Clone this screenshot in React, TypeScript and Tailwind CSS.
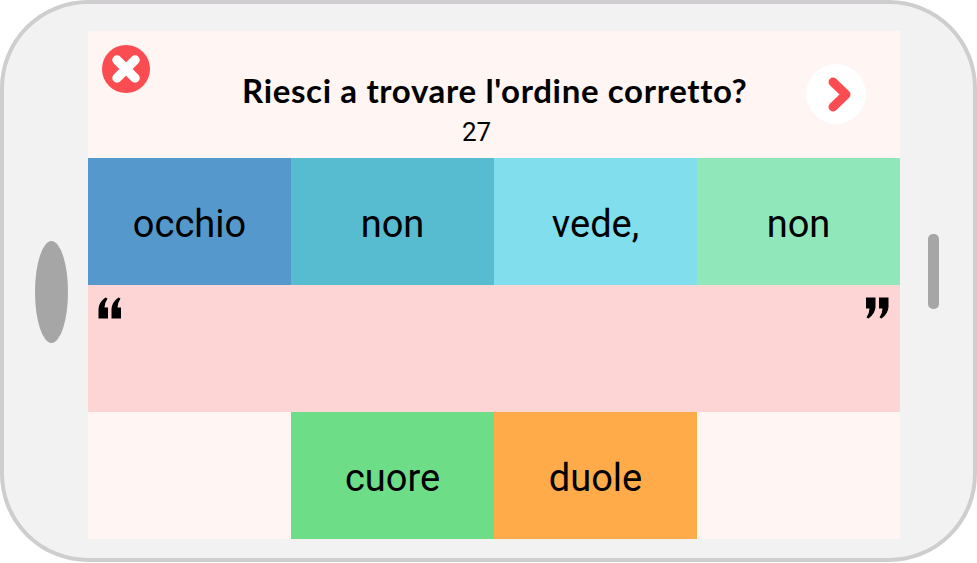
const topWords = [
  { text: "occhio", color: "bg-[#5599cc]" },
  { text: "non", color: "bg-[#57bccf]" },
  { text: "vede,", color: "bg-[#80deed]" },
  { text: "non", color: "bg-[#90e8ba]" },
];

const bottomWords = [
  { text: "", color: "" },
  { text: "cuore", color: "bg-[#6edd87]" },
  { text: "duole", color: "bg-[#ffab49]" },
  { text: "", color: "" },
];

function WordCell({ text, color }: { text: string; color: string }) {
  return (
    <div className={`flex items-center justify-center pt-[5px] text-[38px] text-black ${color}`}>
      {text}
    </div>
  );
}

/* one double quote mark, the closing one is the same drawing turned round */
function QuoteMark({ className }: { className?: string }) {
  return (
    <svg width="24" height="22" viewBox="0 0 24 22" className={className}>
      <path d="M7.5 0.5L9.5 1.5Q6.5 6 6.5 10.5H10V21.5H0.5V12Q1 5 7.5 0.5Z" fill="#000" />
      <path d="M20.5 0.5L22.5 1.5Q19.5 6 19.5 10.5H23V21.5H13.5V12Q14 5 20.5 0.5Z" fill="#000" />
    </svg>
  );
}

export default function App() {
  return (
    <div className="w-[977px] h-[563px] bg-white overflow-hidden font-['Roboto',sans-serif]">
      {/* phone body */}
      <div className="flex h-[562px] w-[977px] items-start rounded-[88px] border-[4px] border-[#cfcdcf] bg-[#f2f2f2]">
        {/* left speaker */}
        <div className="ml-[31px] mt-[237px] h-[102px] w-[33px] rounded-[50%] bg-[#a6a6a6]" />

        {/* screen */}
        <div className="ml-[20px] mt-[27px] grid h-[508px] w-[812px] grid-cols-4 grid-rows-4 bg-[#fff5f2]">
          <div className="col-span-4 flex flex-col items-center">
            <div className="flex h-[86px] w-full items-start">
              <button className="ml-[14px] mt-[14px] h-[48px] w-[48px] shrink-0 rounded-full bg-[#fb4d51]">
                <svg width="48" height="48" viewBox="0 0 48 48" fill="none" stroke="#fff" strokeWidth="9.5" strokeLinecap="round">
                  <path d="M15 15L33 33M33 15L15 33" />
                </svg>
              </button>
              <h1 className="ml-[92px] mt-[41px] whitespace-nowrap text-[33px] leading-[36px] font-bold tracking-[0.65px] text-black font-['Lato',sans-serif]">
                Riesci a trovare l'ordine corretto?
              </h1>
              <button className="ml-auto mr-[34px] mt-[33px] h-[60px] w-[60px] shrink-0 rounded-full bg-white">
                <svg width="60" height="60" viewBox="0 0 60 60" fill="none" stroke="#fb4d51" strokeWidth="9" strokeLinecap="round" strokeLinejoin="round">
                  <path d="M27 18L40 30.5L27 43" />
                </svg>
              </button>
            </div>
            <span className="pr-[35px] text-[26px] leading-[30px] text-black">27</span>
          </div>

          {topWords.map((word, i) => (
            <WordCell key={i} text={word.text} color={word.color} />
          ))}

          {/* drop area */}
          <div className="col-span-4 flex items-start justify-between bg-[#fed5d5] pl-[10px] pr-[11px] pt-[12px]">
            <QuoteMark />
            <QuoteMark className="rotate-180" />
          </div>

          {bottomWords.map((word, i) => (
            <WordCell key={i} text={word.text} color={word.color} />
          ))}
        </div>

        {/* right button */}
        <div className="ml-[28px] mt-[230px] h-[75px] w-[11px] rounded-[5px] bg-[#a6a6a6]" />
      </div>
    </div>
  );
}
